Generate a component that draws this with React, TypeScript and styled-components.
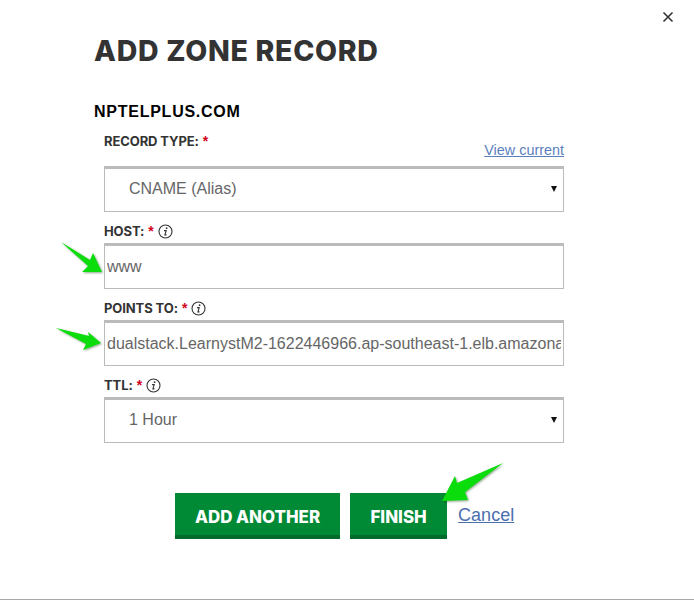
import styled, { createGlobalStyle } from 'styled-components'

const GlobalStyle = createGlobalStyle`
  html, body {
    margin: 0;
    background: #fff;
  }
`

const Modal = styled.div`
  position: relative;
  box-sizing: border-box;
  width: 694px;
  height: 600px;
  padding: 33px 130px 0 94px;
  overflow: hidden;
  border-bottom: 1px solid #aaa;
  background: #fff;
  font-family: "Liberation Sans", Arial, sans-serif;
`

const Close = styled.button`
  position: absolute;
  top: 11px;
  right: 20px;
  display: flex;
  padding: 0;
  border: 0;
  background: none;
  color: #333;
`

const Title = styled.h1`
  margin: 0;
  color: #333;
  font-family: Inter, sans-serif;
  font-size: 28.5px;
  font-weight: 800;
  line-height: 36px;
  letter-spacing: 0.7px;
`

const Domain = styled.h2`
  margin: 26px 0 0;
  color: #000;
  font-size: 16px;
  font-weight: 700;
  line-height: 34px;
  letter-spacing: 0.75px;
`

const Form = styled.form`
  display: flex;
  flex-direction: column;
  gap: 8px;
  margin-top: 2px;
  padding-left: 10px;
`

const Field = styled.div`
  display: flex;
  flex-direction: column;
  gap: 3px;
`

const LabelRow = styled.div<{ $tall?: boolean }>`
  display: flex;
  justify-content: space-between;
  align-items: flex-start;
  box-sizing: border-box;
  height: ${p => (p.$tall ? '32px' : '20px')};
  padding-top: ${p => (p.$tall ? '0' : '1px')};
`

const Label = styled.label`
  display: flex;
  align-items: center;
  gap: 4px;
  height: 20px;
  color: #333;
  font-family: Inter, sans-serif;
  font-size: 13px;
  font-weight: 700;
  letter-spacing: -0.1px;
`

const Required = styled.span`
  color: #d0021b;
  font-family: "Liberation Sans", sans-serif;
  font-size: 14px;
`

const InfoIcon = styled.svg`
  display: block;
  width: 15px;
  height: 15px;
`

const ViewCurrent = styled.a`
  margin-top: 11px;
  color: #5b7fbd;
  font-size: 14.4px;
  line-height: 16px;
  text-decoration: underline;
`

const TextInput = styled.input`
  box-sizing: border-box;
  width: 460px;
  height: 46px;
  padding: 0 2px;
  border: 1px solid #bbb;
  border-top-width: 3px;
  border-radius: 0;
  outline: 0;
  background: #fff;
  color: #666;
  font-family: inherit;
  font-size: 16px;
`

const SelectWrap = styled.div`
  position: relative;
  width: 460px;
  &::after {
    content: "";
    position: absolute;
    top: 20px;
    right: 7px;
    border-top: 6px solid #111;
    border-left: 3px solid transparent;
    border-right: 3px solid transparent;
  }
`

const Select = styled.select`
  display: block;
  box-sizing: border-box;
  width: 100%;
  height: 46px;
  padding: 0 24px 3px;
  border: 1px solid #bbb;
  border-top-width: 3px;
  border-radius: 0;
  outline: 0;
  appearance: none;
  background: #fff;
  color: #666;
  font-family: inherit;
  font-size: 16px;
`

const Actions = styled.div`
  display: flex;
  align-items: center;
  margin-top: 42px;
  padding-left: 71px;
`

const Button = styled.button`
  box-sizing: border-box;
  height: 46px;
  min-width: 97px;
  padding: 5px 20px 0;
  margin-right: 10px;
  border: 0;
  border-bottom: 4px solid #006b2a;
  background: #008a36;
  color: #fff;
  font-family: Inter, sans-serif;
  font-size: 16.9px;
  font-weight: 800;
`

const Cancel = styled.a`
  margin: 0 0 2px 1px;
  color: #4d6fae;
  font-size: 18px;
  text-decoration: underline;
`

const Arrow = styled.svg<{ $top: number; $left: number }>`
  position: absolute;
  top: ${p => p.$top}px;
  left: ${p => p.$left}px;
  overflow: visible;
  filter: drop-shadow(1px 1px 1px rgba(0, 60, 0, 0.45));
`

const Info = () => (
  <InfoIcon viewBox="0 0 15 15">
    <circle cx="7.5" cy="7.5" r="6.5" fill="none" stroke="#333" strokeWidth="1.1" />
    <circle cx="8.6" cy="4.2" r="0.9" fill="#333" />
    <path d="M6 6.6h2.2l-1.3 4.3h1.6" fill="none" stroke="#333" strokeWidth="1.1" />
  </InfoIcon>
)

const App = () => (
  <Modal>
    <GlobalStyle />
    <Close aria-label="Close">
      <svg width="12" height="12" viewBox="0 0 12 12">
        <path d="M1.5 1.5l9 9M10.5 1.5l-9 9" stroke="#333" strokeWidth="1.6" fill="none" />
      </svg>
    </Close>

    <Title>ADD ZONE RECORD</Title>
    <Domain>NPTELPLUS.COM</Domain>

    <Form>
      <Field>
        <LabelRow $tall>
          <Label>RECORD TYPE: <Required>*</Required></Label>
          <ViewCurrent href="#">View current</ViewCurrent>
        </LabelRow>
        <SelectWrap>
          <Select defaultValue="CNAME (Alias)">
            <option>CNAME (Alias)</option>
          </Select>
        </SelectWrap>
      </Field>

      <Field>
        <LabelRow>
          <Label>HOST: <Required>*</Required> <Info /></Label>
        </LabelRow>
        <TextInput defaultValue="www" />
      </Field>

      <Field>
        <LabelRow>
          <Label>POINTS TO: <Required>*</Required> <Info /></Label>
        </LabelRow>
        <TextInput defaultValue="dualstack.LearnystM2-1622446966.ap-southeast-1.elb.amazonaws.com" />
      </Field>

      <Field>
        <LabelRow>
          <Label>TTL: <Required>*</Required> <Info /></Label>
        </LabelRow>
        <SelectWrap>
          <Select defaultValue="1 Hour">
            <option>1 Hour</option>
          </Select>
        </SelectWrap>
      </Field>

      <Actions>
        <Button type="button">ADD ANOTHER</Button>
        <Button type="button">FINISH</Button>
        <Cancel href="#">Cancel</Cancel>
      </Actions>
    </Form>

    <Arrow $top={241} $left={60} width="44" height="32" viewBox="0 0 44 32">
      <path d="M1 1L30 19L33 12L42 31L22 31L28 25Z" fill="#0bdc0b" />
    </Arrow>
    <Arrow $top={328} $left={56} width="46" height="26" viewBox="0 0 46 26">
      <path d="M0 0L33 8L32 4L45 15L27 22L30 16Z" fill="#0bdc0b" />
    </Arrow>
    <Arrow $top={462} $left={441} width="64" height="42" viewBox="0 0 64 42">
      <path d="M62 1L16 21L14 14L1 39L27 38L24 30Z" fill="#0bdc0b" />
    </Arrow>
  </Modal>
)

export default App
